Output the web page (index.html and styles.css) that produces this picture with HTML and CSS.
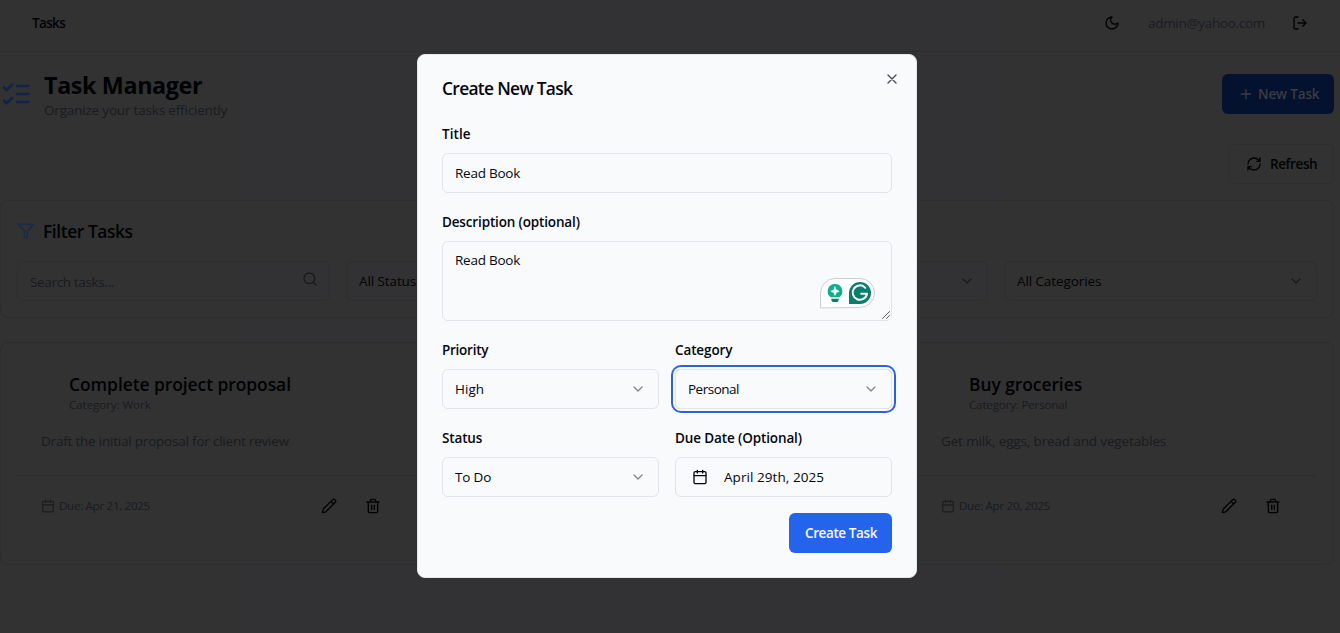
FILE: index.html
```
<!DOCTYPE html>
<html lang="en">
<head>
<meta charset="utf-8">
<title>Task Manager</title>
<link rel="stylesheet" href="styles.css">
</head>
<body>
<svg class="sprite" aria-hidden="true">
  <symbol id="moon" viewBox="0 0 24 24"><path d="M12 3a6 6 0 0 0 9 9 9 9 0 1 1-9-9Z"/></symbol>
  <symbol id="logout" viewBox="0 0 24 24"><path d="M9 21H5a2 2 0 0 1-2-2V5a2 2 0 0 1 2-2h4M9 12h12M16 7l5 5-5 5"/></symbol>
  <symbol id="checks" viewBox="0 0 24 24"><path d="m3 17 2 2 4-4M3 7l2 2 4-4M13 6h8M13 12h8M13 18h8"/></symbol>
  <symbol id="plus" viewBox="0 0 24 24"><path d="M5 12h14M12 5v14"/></symbol>
  <symbol id="refresh" viewBox="0 0 24 24"><path d="M3 12a9 9 0 0 1 9-9 9.75 9.75 0 0 1 6.74 2.74L21 8M21 3v5h-5M21 12a9 9 0 0 1-9 9 9.75 9.75 0 0 1-6.74-2.74L3 16M8 16H3v5"/></symbol>
  <symbol id="filter" viewBox="0 0 24 24"><path d="M22 3H2l8 9.46V19l4 2v-8.54L22 3z"/></symbol>
  <symbol id="search" viewBox="0 0 24 24"><circle cx="11" cy="11" r="8"/><path d="m21 21-4.3-4.3"/></symbol>
  <symbol id="down" viewBox="0 0 24 24"><path d="m6 9 6 6 6-6"/></symbol>
  <symbol id="calendar" viewBox="0 0 24 24"><path d="M8 2v4M16 2v4M3 10h18"/><rect x="3" y="4" width="18" height="18" rx="2"/></symbol>
  <symbol id="pencil" viewBox="0 0 24 24"><path d="M21.17 6.81a1 1 0 0 0-3.98-3.98L3.84 16.17a2 2 0 0 0-.5.83l-1.32 4.35a.5.5 0 0 0 .62.62l4.35-1.32a2 2 0 0 0 .83-.5zM15 5l4 4"/></symbol>
  <symbol id="trash" viewBox="0 0 24 24"><path d="M3 6h18M19 6v14a2 2 0 0 1-2 2H7a2 2 0 0 1-2-2V6M8 6V4a2 2 0 0 1 2-2h4a2 2 0 0 1 2 2v2M10 11v6M14 11v6"/></symbol>
  <symbol id="close" viewBox="0 0 24 24"><path d="M18 6 6 18M6 6l12 12"/></symbol>
</svg>

<header class="topbar">
  <span class="brand">Tasks</span>
  <div class="topbar-right">
    <svg class="icon"><use href="#moon"/></svg>
    <span class="email">admin@yahoo.com</span>
    <svg class="icon"><use href="#logout"/></svg>
  </div>
</header>

<main class="page">
  <div class="page-head">
    <svg class="head-icon"><use href="#checks"/></svg>
    <div class="head-text">
      <h1>Task Manager</h1>
      <p>Organize your tasks efficiently</p>
    </div>
    <button class="btn btn-new"><svg class="icon"><use href="#plus"/></svg><span>New Task</span></button>
  </div>
  <div class="actions">
    <button class="btn btn-refresh"><svg class="icon"><use href="#refresh"/></svg><span>Refresh</span></button>
  </div>

  <section class="filters">
    <h2><svg class="icon"><use href="#filter"/></svg><span>Filter Tasks</span></h2>
    <div class="filter-row">
      <div class="filter search"><span>Search tasks...</span><svg class="icon"><use href="#search"/></svg></div>
      <div class="filter"><span>All Status</span><svg class="icon"><use href="#down"/></svg></div>
      <div class="filter"><span></span><svg class="icon"><use href="#down"/></svg></div>
      <div class="filter"><span>All Categories</span><svg class="icon"><use href="#down"/></svg></div>
    </div>
  </section>

  <section class="cards">
    <article class="card">
      <h3>Complete project proposal</h3>
      <p class="cat">Category: Work</p>
      <p class="desc desc-long">Draft the initial proposal for client review</p>
      <div class="card-foot">
        <svg class="cal"><use href="#calendar"/></svg><span class="due">Due: Apr 21, 2025</span>
        <svg class="icon"><use href="#pencil"/></svg><svg class="icon"><use href="#trash"/></svg>
      </div>
    </article>
    <article class="card"></article>
    <article class="card">
      <h3>Buy groceries</h3>
      <p class="cat cat-personal">Category: Personal</p>
      <p class="desc">Get milk, eggs, bread and vegetables</p>
      <div class="card-foot">
        <svg class="cal"><use href="#calendar"/></svg><span class="due">Due: Apr 20, 2025</span>
        <svg class="icon"><use href="#pencil"/></svg><svg class="icon"><use href="#trash"/></svg>
      </div>
    </article>
  </section>
</main>

<div class="modal" role="dialog">
  <div class="modal-head">
    <h2>Create New Task</h2>
    <svg class="icon"><use href="#close"/></svg>
  </div>
  <div class="form">
    <div class="field wide">
      <label class="l-title">Title</label>
      <div class="control"><span class="v-read">Read Book</span></div>
    </div>
    <div class="field wide">
      <label class="l-desc">Description (optional)</label>
      <div class="control area">
        <span class="v-read">Read Book</span>
        <svg class="assist" viewBox="0 0 56 31">
          <path d="M.5 29.500V15a14.500 14.500 0 0 1 14.500-14.500h25a14.500 14.500 0 0 1 0 29z" fill="#fff" stroke="#cdced3" stroke-width="1"/>
          <path d="M15 6a7.300 7.300 0 0 0-4.300 13.200h8.600A7.300 7.300 0 0 0 15 6z" fill="#0bb08c"/>
          <path d="M15 9l1.300 2.900 2.900 1.300-2.900 1.300L15 17.400l-1.300-2.900-2.900-1.300 2.900-1.300z" fill="#fff" stroke="#fff" stroke-width=".6"/>
          <path d="M11.300 20.700h7.400v1.200l-1.200 2.100h-5l-1.200-2.100z" fill="#087f6c"/>
          <path d="M29 26V15a11 11 0 1 1 11 11z" fill="#087f6c"/>
          <path d="M45.300 9.800a7.200 7.200 0 1 0 1.700 6H41.200" fill="none" stroke="#fff" stroke-width="2"/>
        </svg>
        <svg class="grip" viewBox="0 0 8 8"><path d="M.5 7.500l7-7M4.500 7.500l3-3"/></svg>
      </div>
    </div>
    <div class="field">
      <label class="l-priority">Priority</label>
      <div class="control"><span class="v-high">High</span><svg class="icon chev"><use href="#down"/></svg></div>
    </div>
    <div class="field">
      <label class="l-category">Category</label>
      <div class="control focused"><span class="v-personal">Personal</span><svg class="icon chev"><use href="#down"/></svg></div>
    </div>
    <div class="field">
      <label class="l-status">Status</label>
      <div class="control"><span class="v-todo">To Do</span><svg class="icon chev"><use href="#down"/></svg></div>
    </div>
    <div class="field">
      <label class="l-due">Due Date (Optional)</label>
      <div class="control date"><svg class="icon"><use href="#calendar"/></svg><span class="v-date">April 29th, 2025</span></div>
    </div>
  </div>
  <div class="modal-foot"><button class="btn btn-create">Create Task</button></div>
</div>
</body>
</html>
```
FILE: styles.css
```
* { box-sizing: border-box; }
:root {
  --base: #323232;
  --band: linear-gradient(90deg, #323232 0 240px, #323235 240px 1000px, #323232 1000px);
  --line: #2d2e2f;
  --muted: #191b1f;
}
body {
  margin: 0;
  height: 633px;
  overflow: hidden;
  background: var(--band) fixed;
  color: #010204;
  font: 13.5px/20px "Open Sans", "Noto Sans", sans-serif;
}
h1, h2, h3, p { margin: 0; }
.sprite { position: absolute; width: 0; height: 0; }
svg { fill: none; stroke: currentColor; stroke-width: 2; stroke-linecap: round; stroke-linejoin: round; flex: none; }
.icon { width: 16px; height: 16px; }

.topbar {
  display: flex;
  justify-content: space-between;
  height: 52px;
  padding: 13px 32px 0;
  border-bottom: 1px solid var(--line);
}
.brand { font-weight: 600; letter-spacing: -.65px; }
.topbar-right { display: flex; gap: 28px; }
.topbar-right .icon { margin-top: 2px; }
.email { width: 117px; margin-right: -1px; color: #1a1b24; letter-spacing: -.3px; }

.page { width: 1334px; }
.page-head { display: flex; align-items: center; height: 84px; }
.head-icon { width: 32px; height: 32px; color: #112150; }
.head-text { flex: 1; margin-left: 12px; }
h1 { font-size: 23.3px; line-height: 32px; letter-spacing: -.36px; font-weight: 700; }
.head-text p { color: var(--muted); letter-spacing: -.18px; line-height: 18px; }

.btn { display: flex; align-items: center; height: 40px; border: 0; border-radius: 6px; font: inherit; font-weight: 600; padding: 0 16px; white-space: nowrap; }
.btn-new { width: 112px; padding-right: 0; background: #04122f; color: #3a3c42; letter-spacing: -.15px; }
.btn-new .icon { margin-right: 4px; }
.actions { display: flex; justify-content: flex-end; padding: 8px 0 16px; }
.btn-refresh { width: 105px; padding: 0 0 0 16px; background: none; border: 1px solid var(--line); letter-spacing: -.4px; color: #010204; }
.btn-refresh .icon { margin-right: 8px; }

.filters { height: 118px; padding: 16px; border: 1px solid var(--line); border-radius: 8px; background: var(--base); }
.filters h2 { display: flex; align-items: center; gap: 8px; height: 28px; font-size: 17.4px; font-weight: 600; letter-spacing: -.42px; margin-bottom: 16px; }
.filters h2 .icon { width: 18px; height: 18px; color: #172a4c; }
.filter-row { display: grid; grid-template-columns: repeat(4, 313px); gap: 16px; }
.filter { display: flex; align-items: center; justify-content: space-between; height: 40px; padding: 0 12px; border: 1px solid #2e2e30; border-radius: 6px; background: var(--band) fixed; letter-spacing: -.1px; }
.filter .icon { color: #19191b; }
.search { color: var(--muted); letter-spacing: -.34px; padding-right: 11px; padding-top: 1px; }
.search .icon { margin-bottom: 5px; }

.cards { display: grid; grid-template-columns: repeat(3, 434px); gap: 16px; margin-top: 24px; }
.card { height: 223px; padding: 27px 16px 0; border: 1px solid var(--line); border-radius: 8px; background: var(--base); }
.card h3 { margin-left: 52px; font-size: 17.4px; line-height: 28px; font-weight: 600; letter-spacing: -.04px; }
.cat { margin-left: 52px; font-size: 11.6px; line-height: 14px; letter-spacing: -.08px; color: var(--muted); }
.cat-personal { letter-spacing: -.18px; }
.desc { margin: 19px 24px 24px; color: var(--muted); letter-spacing: -.14px; }
.desc-long { letter-spacing: -.21px; }
.card-foot { display: flex; align-items: center; height: 61px; padding: 0 36px 0 24px; border-top: 1px solid #2d2d2e; }
.cal { width: 14px; height: 14px; color: #1b1c1f; }
.due { flex: 1; margin-left: 4px; font-size: 11.6px; letter-spacing: -.3px; color: var(--muted); }
.card-foot .icon + .icon { margin-left: 28px; }

.modal {
  position: absolute;
  left: 417px;
  top: 54px;
  width: 500px;
  height: 524px;
  padding: 24px;
  border: 1px solid #e4e7ec;
  border-radius: 8px;
  background: #f9fafc;
  color: #04060f;
}
.modal-head { display: flex; justify-content: space-between; height: 45px; }
.modal-head h2 { font-size: 17.4px; line-height: 18px; font-weight: 600; letter-spacing: -.7px; }
.modal-head .icon { margin: -8px -8px 0 0; color: #4a4c57; }
.form { display: grid; grid-template-columns: 217px 217px; column-gap: 16px; row-gap: 19px; }
.wide { grid-column: span 2; }
label { display: block; font-weight: 600; margin-bottom: 9px; }
.l-title { letter-spacing: .05px; }
.l-desc { letter-spacing: -.15px; }
.l-priority { letter-spacing: -.26px; }
.l-category { letter-spacing: -.12px; }
.l-status { letter-spacing: -.15px; }
.l-due { letter-spacing: -.12px; }
.control { position: relative; display: flex; align-items: center; justify-content: space-between; height: 40px; padding: 0 12px; border: 1px solid #e2e5ec; border-radius: 6px; }
.v-read { letter-spacing: -.25px; }
.v-high { letter-spacing: .05px; }
.v-personal { letter-spacing: -.5px; }
.v-todo { letter-spacing: -.15px; }
.v-date { letter-spacing: .06px; }
.chev { color: #85868c; }
.area { height: 80px; align-items: flex-start; padding-top: 8px; }
.assist { position: absolute; right: 15px; bottom: 11px; width: 56px; height: 31px; stroke: none; }
.grip { position: absolute; right: 1px; bottom: 1px; width: 8px; height: 8px; stroke: #55565c; stroke-width: 1; }
.focused { box-shadow: 0 0 0 2px #f9fafc, 0 0 0 4px #2e62d6; }
.date { justify-content: flex-start; gap: 16px; padding-left: 16px; }
.modal-foot { display: flex; justify-content: flex-end; padding-top: 16px; }
.btn-create { width: 103px; background: #2463eb; color: #f8fafc; letter-spacing: -.4px; }
```
